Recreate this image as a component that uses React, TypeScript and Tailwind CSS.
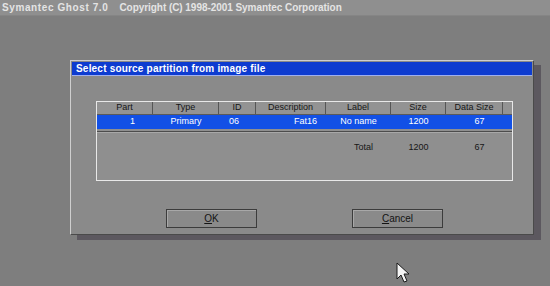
import React from 'react';

const cols = [
  { label: 'Part', w: 'w-[56px]' },
  { label: 'Type', w: 'w-[66px]' },
  { label: 'ID', w: 'w-[37px]' },
  { label: 'Description', w: 'w-[70px]' },
  { label: 'Label', w: 'w-[65px]' },
  { label: 'Size', w: 'w-[55px]' },
  { label: 'Data Size', w: 'w-[57px]' },
];

const Cursor = () => (
  <svg className="absolute left-[396px] top-[262px]" width="16" height="22" viewBox="0 0 16 22">
    <path d="M1 1 L1 17 L5 13 L8 20 L11 19 L8 12 L13 12 Z" fill="#f4f4f4" stroke="#1a1a1a" strokeWidth="1" />
  </svg>
);

const Button = ({ hot, rest }: { hot: string; rest: string }) => (
  <div className="w-[91px] h-[19px] border border-[#3c3c3c] bg-[#8a8a8a] flex items-center justify-center shadow-[inset_1px_1px_0_#a8a8a8]">
    <span className="text-[10px] text-[#141414]">
      <span className="underline">{hot}</span>
      {rest}
    </span>
  </div>
);

export default function App() {
  return (
    <div className="relative w-[550px] h-[286px] bg-[#7e7e7e] overflow-hidden font-['Liberation_Sans',sans-serif]">
      {/* top status bar */}
      <div className="h-[16px] bg-[#8f8f8f] flex items-center pl-[2px] text-[10px] font-bold text-[#e4e4e4] border-b border-[#858585]">
        <span className="tracking-[0.6px]">Symantec Ghost 7.0</span>
        <span className="ml-[11px] tracking-[-0.05px]">Copyright (C) 1998-2001 Symantec Corporation</span>
      </div>

      {/* dialog */}
      <div className="ml-[70px] mt-[44px] w-[464px] h-[175px] bg-[#8a8a8a] border-l border-t border-[#cfcfcf] border-r border-b border-r-[#4a4a4a] border-b-[#4a4a4a] shadow-[7px_5px_0_#5c585f] flex flex-col">
        <div className="mx-[1px] mt-[1px] h-[14px] bg-[#0e3cd0] border-b border-[#9fb0f0] flex items-center pl-[4px]">
          <span className="text-[10px] font-bold text-white tracking-[0.2px]">Select source partition from image file</span>
        </div>

        {/* table */}
        <div className="ml-[25px] mt-[25px] w-[417px] h-[80px] border border-[#e8e8e8] bg-[#8f8f8f] flex flex-col text-[9px] text-[#161616]">
          <div className="flex h-[13px] bg-[#939393] border-b border-[#5a5a5a]">
            {cols.map((c) => (
              <div key={c.label} className={`${c.w} border-r border-[#555555] flex items-center justify-center`}>
                {c.label}
              </div>
            ))}
            <div className="flex-1" />
          </div>
          <div className="flex h-[14px] bg-[#1250e6] text-white items-center">
            <div className="w-[56px] text-right pr-[18px]">1</div>
            <div className="w-[66px] text-center">Primary</div>
            <div className="w-[37px] pl-[10px]">06</div>
            <div className="w-[70px] text-right pr-[9px]">Fat16</div>
            <div className="w-[65px] text-center">No name</div>
            <div className="w-[55px] text-center">1200</div>
            <div className="w-[57px] text-center pl-[10px]">67</div>
          </div>
          <div className="mt-[2px] h-[2px] border-t border-[#4c4c4c] border-b border-b-[#a8a8a8]" />
          <div className="flex h-[14px] mt-[8px] items-center">
            <div className="w-[229px]" />
            <div className="w-[65px] text-center pl-[10px]">Total</div>
            <div className="w-[55px] text-center">1200</div>
            <div className="w-[57px] text-center pl-[10px]">67</div>
          </div>
        </div>

        {/* buttons */}
        <div className="mt-[28px] flex pl-[95px] gap-[95px]">
          <Button hot="O" rest="K" />
          <Button hot="C" rest="ancel" />
        </div>
      </div>

      <Cursor />
    </div>
  );
}
